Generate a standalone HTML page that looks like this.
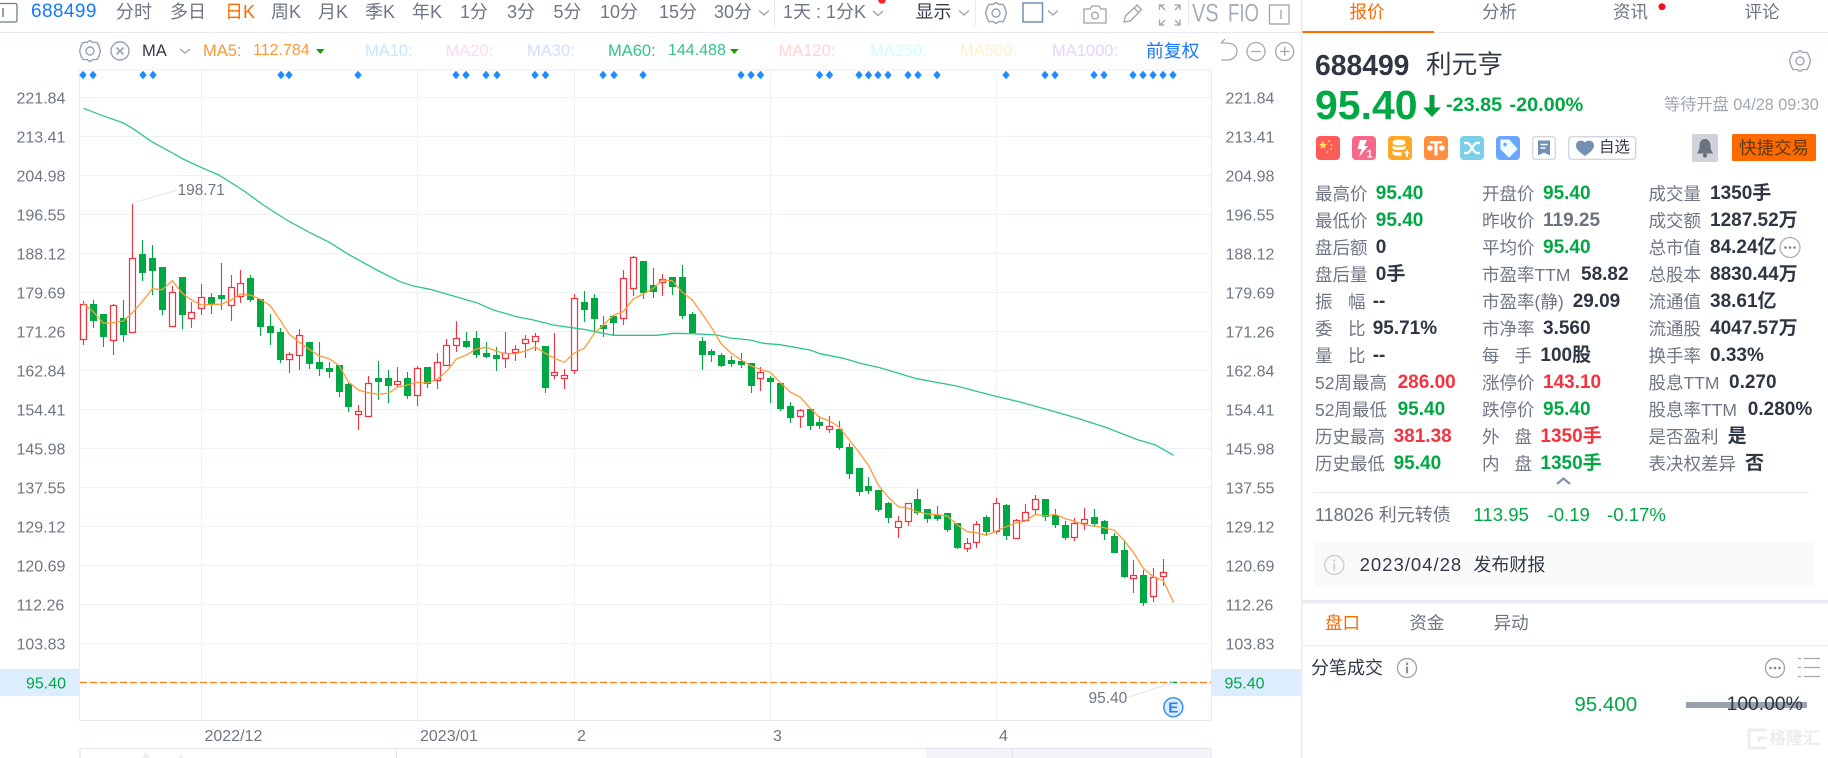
<!DOCTYPE html>
<html lang="zh-CN">
<head>
<meta charset="utf-8">
<title>688499 利元亨</title>
<style>
html,body{margin:0;padding:0;background:#fff}
body{width:1828px;height:758px;overflow:hidden;position:relative;font-family:"Liberation Sans","Noto Sans CJK SC",sans-serif;color:#6f7684}
svg.bg{position:absolute;left:0;top:0}
svg text{font-family:"Liberation Sans","Noto Sans CJK SC",sans-serif}
.t{position:absolute;white-space:nowrap;line-height:20px;font-size:17.5px;color:#6f7684}
.v{position:absolute;white-space:nowrap;line-height:20px;font-size:19px;font-weight:bold;color:#2f3643}
.g{color:#00a843}.r{color:#f5333f}.m{color:#6c7280}
.tb{font-size:18px;top:2px;color:#6f7684}
.ma{font-size:16.5px;top:41px}
</style>
</head>
<body>
<svg class="bg" width="1828" height="758" viewBox="0 0 1828 758" xmlns="http://www.w3.org/2000/svg">
<defs>
<g id="gear" fill="none" stroke-linejoin="round"><path d="M0-10.5 3-8.6 7-8.6 9-5 10.4 0 9 5 7 8.6 3 8.6 0 10.5-3 8.6-7 8.6-9 5-10.4 0-9-5-7-8.6-3-8.6Z"/><circle r="4"/></g>
</defs>
<!-- lines -->
<rect x="0" y="32" width="1302" height="1" fill="#e6e9ef"/>
<rect x="1302" y="32" width="526" height="1" fill="#e6e9ef"/>
<rect x="1302" y="31" width="132" height="2" fill="#ff6a00"/>
<rect x="1301" y="0" width="1.5" height="758" fill="#e9ecf1"/>
<!-- highlights -->
<rect x="0" y="669" width="79.5" height="27" fill="#dbedff"/>
<rect x="1212" y="669" width="89" height="27" fill="#dbedff"/>
<!-- grid -->
<path stroke="#eef1f5" fill="none" d="M80 97.5H1211M80 136.5H1211M80 175.5H1211M80 214.5H1211M80 253.5H1211M80 292.5H1211M80 331.5H1211M80 370.5H1211M80 409.5H1211M80 448.5H1211M80 487.5H1211M80 526.5H1211M80 565.5H1211M80 604.5H1211M80 643.5H1211M201.5 70V720M417.5 70V720M574.5 70V720M770.5 70V720M996.5 70V720"/>
<path stroke="#e8ebf0" fill="none" d="M79.5 70V720.5H1211.5V70H79.5"/>
<!-- bottom slider -->
<rect x="926" y="749" width="285" height="9" fill="#f4f5f8"/>
<path stroke="#e3e7ed" stroke-width="1.2" fill="none" d="M80 748.5H1211M80 748V758M396.5 749V758M1012.5 749V758M1211 748V758"/>
<path fill="#eef2f7" d="M142 758l4-7 4 7zM178 758l3-4 3 4z"/>
<!-- dashed -->
<path stroke="#ff7f1f" stroke-width="1.2" stroke-dasharray="7 3" fill="none" d="M80 682.5H1211"/>
<!-- diamonds -->
<path fill="#1e8cff" stroke="#1e8cff" stroke-width="1" stroke-linejoin="round" d="M83 71.5l3 3.5-3 3.5-3-3.5zM93 71.5l3 3.5-3 3.5-3-3.5zM143 71.5l3 3.5-3 3.5-3-3.5zM153 71.5l3 3.5-3 3.5-3-3.5zM281 71.5l3 3.5-3 3.5-3-3.5zM289 71.5l3 3.5-3 3.5-3-3.5zM358 71.5l3 3.5-3 3.5-3-3.5zM456 71.5l3 3.5-3 3.5-3-3.5zM466 71.5l3 3.5-3 3.5-3-3.5zM486 71.5l3 3.5-3 3.5-3-3.5zM497 71.5l3 3.5-3 3.5-3-3.5zM535 71.5l3 3.5-3 3.5-3-3.5zM545.5 71.5l3 3.5-3 3.5-3-3.5zM603 71.5l3 3.5-3 3.5-3-3.5zM614 71.5l3 3.5-3 3.5-3-3.5zM643 71.5l3 3.5-3 3.5-3-3.5zM741 71.5l3 3.5-3 3.5-3-3.5zM751 71.5l3 3.5-3 3.5-3-3.5zM760.5 71.5l3 3.5-3 3.5-3-3.5zM819.5 71.5l3 3.5-3 3.5-3-3.5zM829.5 71.5l3 3.5-3 3.5-3-3.5zM859 71.5l3 3.5-3 3.5-3-3.5zM868.5 71.5l3 3.5-3 3.5-3-3.5zM878 71.5l3 3.5-3 3.5-3-3.5zM888 71.5l3 3.5-3 3.5-3-3.5zM908 71.5l3 3.5-3 3.5-3-3.5zM918 71.5l3 3.5-3 3.5-3-3.5zM937 71.5l3 3.5-3 3.5-3-3.5zM1006 71.5l3 3.5-3 3.5-3-3.5zM1045 71.5l3 3.5-3 3.5-3-3.5zM1055 71.5l3 3.5-3 3.5-3-3.5zM1094 71.5l3 3.5-3 3.5-3-3.5zM1104 71.5l3 3.5-3 3.5-3-3.5zM1133 71.5l3 3.5-3 3.5-3-3.5zM1143 71.5l3 3.5-3 3.5-3-3.5zM1153 71.5l3 3.5-3 3.5-3-3.5zM1163 71.5l3 3.5-3 3.5-3-3.5zM1173 71.5l3 3.5-3 3.5-3-3.5z"/>
<!-- green wicks -->
<path stroke="#00a843" stroke-width="1.1" fill="none" d="M93.5 300V328M103.5 314V347M123.5 300V342M142.5 240V281M152.5 245V295M162.5 267V315M182.5 277V329M211.5 293V314M221.5 263V310M250.5 275V302M260.5 299V336M270.5 314V345M280.5 328V363M309.5 342V369M319.5 342V376M329.5 362V378M339.5 365V397M348.5 383V412M378.5 361V400M388.5 370V403M407.5 372V399M427.5 367V388M466.5 332V348M476.5 331V358M486.5 342V358M496.5 347V371M545.5 346V393M584.5 291V322M594.5 294V333M603.5 316V337M613.5 316V335M643.5 261V299M653.5 268V298M672.5 277V295M682.5 265V319M692.5 312V333M702.5 337V370M711.5 349V362M721.5 353V367M731.5 356V367M741.5 353V368M751.5 363V393M770.5 376V403M780.5 383V411M790.5 402V423M810.5 409V430M819.5 416V429M839.5 421V450M849.5 443V479M859.5 468V496M868.5 477V494M878.5 490V512M888.5 502V523M917.5 489V515M927.5 509V523M937.5 506V521M947.5 513V532M957.5 523V549M986.5 515V536M1006.5 504V540M1045.5 499V521M1055.5 509V528M1065.5 521V540M1094.5 509V527M1104.5 520V540M1114.5 533V553M1124.5 540V578M1143.5 570V606"/>
<!-- green bodies -->
<path fill="#00a843" d="M90 304h7v17h-7zM100 314h7v23h-7zM120 318h7v17h-7zM139 254h7v19h-7zM149 258h7v13h-7zM159 267h7v43h-7zM179 277h7v38h-7zM208 297h7v7h-7zM218 295h7v4h-7zM247 278h7v22h-7zM257 299h7v28h-7zM267 326h7v7h-7zM277 332h7v28h-7zM306 342h7v22h-7zM316 362h7v7h-7zM326 368h7v4h-7zM336 365h7v27h-7zM345 384h7v23h-7zM375 378h7v4h-7zM385 378h7v8h-7zM404 378h7v18h-7zM424 367h7v17h-7zM463 341h7v6h-7zM473 338h7v17h-7zM483 353h7v4h-7zM493 355h7v4h-7zM542 346h7v42h-7zM581 302h7v8h-7zM591 298h7v21h-7zM600 325h7v4h-7zM610 316h7v7h-7zM640 261h7v32h-7zM650 285h7v7h-7zM669 277h7v10h-7zM679 277h7v39h-7zM689 314h7v19h-7zM699 341h7v14h-7zM708 351h7v4h-7zM718 355h7v11h-7zM728 360h7v4h-7zM738 361h7v4h-7zM748 363h7v23h-7zM767 378h7v4h-7zM777 383h7v26h-7zM787 406h7v12h-7zM807 409h7v17h-7zM816 422h7v4h-7zM836 429h7v19h-7zM846 447h7v27h-7zM856 468h7v24h-7zM865 486h7v5h-7zM875 490h7v20h-7zM885 503h7v15h-7zM914 499h7v14h-7zM924 509h7v10h-7zM934 515h7v4h-7zM944 513h7v17h-7zM954 523h7v25h-7zM983 517h7v15h-7zM1003 505h7v31h-7zM1042 499h7v18h-7zM1052 515h7v10h-7zM1062 525h7v13h-7zM1091 517h7v7h-7zM1101 521h7v13h-7zM1111 536h7v17h-7zM1121 550h7v27h-7zM1140 575h7v28h-7z"/>
<!-- red wicks -->
<path stroke="#f5333f" stroke-width="1.1" fill="none" d="M83.5 301V345M113.5 304V355M132.5 204V333M172.5 286V327M191.5 302V328M201.5 284V315M231.5 275V321M240.5 270V303M289.5 352V373M299.5 329V370M358.5 405V430M368.5 376V417M397.5 367V387M417.5 366V406M437.5 353V389M446.5 339V366M456.5 321V352M505.5 332V368M515.5 345V361M525.5 335V358M535.5 333V351M554.5 333V379M564.5 369V389M574.5 294V374M623.5 270V325M633.5 256V296M662.5 274V296M760.5 367V391M800.5 409V428M829.5 416V433M898.5 516V538M908.5 503V526M967.5 538V552M976.5 521V548M996.5 498V534M1016.5 519V539M1025.5 504V522M1035.5 495V514M1074.5 518V541M1084.5 508V530M1133.5 560V593M1153.5 568V602M1163.5 559V586"/>
<!-- red bodies -->
<path fill="#fff" stroke="#f5333f" stroke-width="1.2" d="M80.5 304.5h6v35h-6zM110.5 305.5h6v35h-6zM129.5 258.5h6v74h-6zM169.5 292.5h6v34h-6zM188.5 312.5h6v6h-6zM198.5 297.5h6v11h-6zM228.5 287.5h6v18h-6zM237.5 283.5h6v13h-6zM286.5 354.5h6v5h-6zM296.5 335.5h6v20h-6zM355.5 411.5h6v3h-6zM365.5 383.5h6v33h-6zM394.5 381.5h6v3h-6zM414.5 368.5h6v27h-6zM434.5 362.5h6v18h-6zM443.5 345.5h6v20h-6zM453.5 338.5h6v7h-6zM502.5 353.5h6v5h-6zM512.5 349.5h6v3h-6zM522.5 339.5h6v4h-6zM532.5 336.5h6v5h-6zM551.5 372.5h6v3h-6zM561.5 375.5h6v3h-6zM571.5 298.5h6v72h-6zM620.5 278.5h6v40h-6zM630.5 257.5h6v31h-6zM659.5 279.5h6v3h-6zM757.5 372.5h6v6h-6zM797.5 410.5h6v6h-6zM826.5 426.5h6v3h-6zM895.5 521.5h6v6h-6zM905.5 503.5h6v18h-6zM964.5 543.5h6v5h-6zM973.5 524.5h6v18h-6zM993.5 503.5h6v28h-6zM1013.5 520.5h6v18h-6zM1022.5 512.5h6v8h-6zM1032.5 499.5h6v10h-6zM1071.5 523.5h6v14h-6zM1081.5 519.5h6v4h-6zM1130.5 575.5h6v3h-6zM1150.5 577.5h6v19h-6zM1160.5 572.5h6v4h-6z"/>
<path stroke="#00a843" stroke-width="1.5" d="M1170 682.5h7"/>
<!-- MA60 -->
<polyline fill="none" stroke="#2fc48d" stroke-width="1.3" points="83.5,108.3 102.7,115.7 122.8,122.7 134,129.3 151.8,141.7 171.9,152.7 183,159 200.9,167.3 218.8,175 242.7,190 263.3,205 288.3,221 310,232.7 330,242.7 348.3,254.3 376.7,270 400,281.7 413.3,286 430,289.3 450,295 476.7,302.7 493.3,310 516.7,316.7 533.3,320 553.3,325 583.3,329.3 613.3,335.3 656.7,335.3 673.3,333.3 693.3,333.7 716.7,335 730,338 750,340 763.3,343.3 780,344.7 810,350 820,353.7 843.3,358.3 860,363.3 880,367.7 896.7,372.7 916.7,378.7 956.7,386 980,392.3 996.7,396.5 1020,402 1049,410 1080,419 1107.5,428 1138.3,440 1155,444.7 1173.7,455.3"/>
<!-- MA5 -->
<polyline fill="none" stroke="#ff9a3c" stroke-width="1.3" points="83.3,303.3 93.3,311.7 103.3,323.3 113.3,322.7 123.3,321 132.3,312.7 142.3,301.7 152.3,288.7 162.3,289.7 172.3,280.7 182.3,293.3 191.3,300 201.3,305 211.3,304.3 221.3,304.3 231.3,300 240.3,294 250.3,295 260.3,299.3 270.3,305.7 280,320 289.3,334.3 299.3,342.3 309.3,349.3 319.3,356 329.3,358.7 339.3,365.7 348.3,381.7 358.3,390 368.3,392.7 378.3,394.3 388.3,393.3 397.3,387.3 407.3,385 417.3,382.3 427.3,383 437.3,379.3 446.3,371.7 456.3,359 466.3,355 476.3,349 486.3,347.3 496.3,351 505.3,353.7 515.3,353.7 525.3,351 535.3,347 545.3,353.3 554.3,358.3 564.3,362.3 574.3,353 584.3,348.3 594.3,333.3 603.3,325 613.3,315.3 623.3,311.7 633.3,299 643.3,294 653.3,288.3 662.3,280 672.3,280.7 682.3,292.3 692.3,300 702.3,314 711.3,327.3 721.3,344 731.3,353.3 741.3,360 751.3,366 760.3,369.3 770.3,372.3 780.3,382.7 790.3,392 800.3,397.3 810.3,408.3 819.3,417.3 829.3,420.7 839.3,427.3 849.3,440 859.3,452.7 868.3,465 878.3,485 888.3,497.3 898.3,506.7 908.3,508.3 917.3,511.7 927.3,514 937.3,514.7 947.3,516 957.3,525 967.3,531.7 976.3,532.7 986.3,535.3 996.3,531 1006.3,526.7 1016.3,522.7 1025.3,521 1035.3,514.3 1045.3,516 1055.3,514.3 1065.3,518.7 1074.3,521 1084.3,525 1094.3,526 1104.3,527.7 1114.3,530.3 1124.3,540.7 1133.3,552.3 1143.3,568.3 1153.3,576.7 1163.3,580.7 1173.7,602.7"/>
<!-- annotations -->
<path stroke="#e2e4e9" fill="none" d="M132.5 203L177 190M1129 697L1173 682.5"/>
<g font-size="15.5" fill="#6f7684">
<text x="177.5" y="195">198.71</text>
<text x="1088.5" y="703">95.40</text>
</g>
<circle cx="1173.3" cy="707.3" r="9.5" fill="#dcecff" stroke="#3b8fef" stroke-width="1.5"/>
<text x="1173.3" y="712.6" font-size="15" fill="#2b7fe6" text-anchor="middle" font-weight="bold">E</text>
<!-- axis labels -->
<g font-size="16" fill="#6f7684">
<text x="16.5" y="103.5">221.84</text><text x="16.5" y="142.5">213.41</text><text x="16.5" y="181.5">204.98</text><text x="16.5" y="220.5">196.55</text><text x="16.5" y="259.5">188.12</text><text x="16.5" y="298.5">179.69</text><text x="16.5" y="337.5">171.26</text><text x="16.5" y="376.5">162.84</text><text x="16.5" y="415.5">154.41</text><text x="16.5" y="454.5">145.98</text><text x="16.5" y="493.5">137.55</text><text x="16.5" y="532.5">129.12</text><text x="16.5" y="571.5">120.69</text><text x="16.5" y="610.5">112.26</text><text x="16.5" y="649.5">103.83</text>
<text x="1225.5" y="103.5">221.84</text><text x="1225.5" y="142.5">213.41</text><text x="1225.5" y="181.5">204.98</text><text x="1225.5" y="220.5">196.55</text><text x="1225.5" y="259.5">188.12</text><text x="1225.5" y="298.5">179.69</text><text x="1225.5" y="337.5">171.26</text><text x="1225.5" y="376.5">162.84</text><text x="1225.5" y="415.5">154.41</text><text x="1225.5" y="454.5">145.98</text><text x="1225.5" y="493.5">137.55</text><text x="1225.5" y="532.5">129.12</text><text x="1225.5" y="571.5">120.69</text><text x="1225.5" y="610.5">112.26</text><text x="1225.5" y="649.5">103.83</text>
<text x="204.5" y="741">2022/12</text><text x="420" y="741">2023/01</text><text x="577" y="741">2</text><text x="773" y="741">3</text><text x="999" y="741">4</text>
<text x="26" y="688.5" fill="#00a843">95.40</text><text x="1224.5" y="688.5" fill="#00a843">95.40</text>
</g>
<!-- toolbar icons -->
<rect x="-8" y="3.5" width="25" height="18.5" rx="1.5" fill="none" stroke="#6e7c8e" stroke-width="1.3"/><path d="M3 8v9" stroke="#6e7c8e" stroke-width="1.5"/>
<g fill="none" stroke="#9aa3ae" stroke-width="1.3"><path d="M759 10.5l5 4.5 5-4.5M873 11l5 4.5 5-4.5M959 10.5l5 4.5 5-4.5M1048 10.5l5 4.5 5-4.5M180 49l5 4 5-4"/></g>
<path d="M774.5 0v26M975.5 0v26M1188.5 0v26" stroke="#e6e9ef"/>
<circle cx="882" cy="0" r="3.8" fill="#f5262f"/>
<use href="#gear" transform="translate(996 13)" stroke="#94a0ae" stroke-width="1.4"/>
<rect x="1023" y="3" width="19.5" height="19" fill="none" stroke="#7490b0" stroke-width="1.5"/>
<g fill="none" stroke="#9aa3ae" stroke-width="1.3">
<path d="M1084 9h6l2-3h7l2 3h5v14h-22z"/><circle cx="1095" cy="15.5" r="3.4"/>
<path d="M1124 22l1.5-6L1137 5l4.5 4.5-11 11.5zM1134 8l4.5 4.5"/>
<path d="M1159.5 10V5h5M1174.5 5h5.5v5M1180 19.5V25h-5.5M1164.5 25h-5V19.5M1160 5l5 5M1180 5l-5 5M1180 25l-5-5M1160 25l5-5"/>
<rect x="1269.5" y="5" width="19.5" height="19"/><path d="M1281 10v9"/>
</g>
<text transform="translate(1192 21.5) scale(1 1.25)" font-size="20" fill="#a4adba">VS</text>
<text transform="translate(1228 21.5) scale(.93 1.25)" font-size="20" fill="#a4adba">FIO</text>
<!-- chart header icons -->
<use href="#gear" transform="translate(90 51)" stroke="#94a3b6" stroke-width="1.4"/>
<circle cx="120" cy="51" r="9" fill="none" stroke="#94a3b6" stroke-width="1.4"/>
<path d="M116.5 47.5l7 7M123.5 47.5l-7 7" stroke="#94a3b6" stroke-width="1.6"/>
<path d="M316 49l8.5 0-4.2 5z" fill="#1a9a00"/><path d="M730 49l8.5 0-4.2 5z" fill="#1a9a00"/>
<g fill="none" stroke="#a0a8b3" stroke-width="1.3">
<path d="M1221 43h5M1221 43l4-4M1225 43c8 0 12 3 12 8s-4 9-10 9h-6"/>
<circle cx="1256" cy="51.5" r="9"/><path d="M1251.5 51.5h9"/>
<circle cx="1284.7" cy="51.5" r="9"/><path d="M1280.2 51.5h9M1284.7 47v9"/>
</g>
<!-- panel -->
<circle cx="1662" cy="6.7" r="3.5" fill="#f00f1e"/>
<use href="#gear" transform="translate(1800 61)" stroke="#a0a8b4" stroke-width="1.4"/>
<path d="M1429.5 95h5v12.5h6.5L1432 117l-9-9.5h6.5z" fill="#00a040"/>
<!-- badges -->
<rect x="1316" y="136" width="24" height="24" rx="4" fill="#fb5b5b"/>
<path d="M1323 141l1.2 2.7 2.9.3-2.2 1.9.7 2.9-2.6-1.5-2.6 1.5.7-2.9-2.2-1.9 2.9-.3z" fill="#ffe34d"/>
<g fill="#ffd34d"><circle cx="1329" cy="141" r="1"/><circle cx="1331.5" cy="145" r="1"/><circle cx="1331" cy="149" r="1"/><circle cx="1327.5" cy="152" r="1"/></g>
<rect x="1352" y="136" width="24" height="24" rx="4" fill="#fb6789"/>
<path d="M1360 140h7l-3 6h4l-9 11 2.5-8h-4z" fill="#fff"/>
<text x="1366.5" y="157.5" font-size="11" font-weight="bold" fill="#fff">1</text>
<rect x="1388" y="136" width="24" height="24" rx="4" fill="#ffa726"/>
<g fill="#fff"><ellipse cx="1399" cy="142.5" rx="6.5" ry="3"/><path d="M1392.5 145.5c2 2 11 2 13 0v3c-2 2-11 2-13 0zM1392.5 150.5c2 2 8 2 9 1.5v3.5c-3 .8-7 .5-9-1.5z"/><path d="M1407 150l3 3.5h-2v3.5h-2v-3.5h-2z"/></g>
<rect x="1424" y="136" width="24" height="24" rx="4" fill="#ff8f3e"/>
<path d="M1430 141h12v2.5h-4.5v12h-3v-12H1430z" fill="#fff"/><circle cx="1430" cy="148" r="2.8" fill="#fff"/><circle cx="1442" cy="148" r="2.8" fill="#fff"/>
<rect x="1460" y="136" width="24" height="24" rx="4" fill="#7bcfe8"/>
<path d="M1464 143h3c4 0 6 10 10 10h3M1464 153h3c4 0 6-10 10-10h3" fill="none" stroke="#fff" stroke-width="2.2"/>
<rect x="1496" y="136" width="24" height="24" rx="4" fill="#6aa6ff"/>
<path d="M1501 140h8l8 9-8 8-8-8z" fill="#eefcff" stroke="#eefcff" stroke-linejoin="round"/><circle cx="1505" cy="144.5" r="1.8" fill="#6aa6ff"/>
<rect x="1532.7" y="136.7" width="22.6" height="22.6" rx="2.5" fill="#fff" stroke="#d0d7e0" stroke-width="1.4"/>
<path d="M1538 140.5h12v15l-6-3-6 3z" fill="#7390b0"/><path d="M1540.5 144.5h7M1540.5 148h5" stroke="#fff" stroke-width="1.4"/>
<rect x="1568.7" y="136.7" width="67" height="22.6" rx="3" fill="#fff" stroke="#d0d7e0" stroke-width="1.4"/>
<path d="M1585 156c-4-3-9-6-9-10.500 0-5 6-6.500 9-3 3-3.500 9-2 9 3 0 4.500-5 7.500-9 10.500z" fill="#7390b0"/>
<rect x="1692" y="134" width="26" height="28" rx="1.5" fill="#d0d3d9"/>
<path d="M1705 139c4 0 5.500 3.500 5.500 7 0 4 1.500 5.500 2.500 7.500h-16c1-2 2.500-3.500 2.500-7.500 0-3.500 1.500-7 5.500-7z" fill="#6b7280"/><circle cx="1705" cy="155.500" r="2.200" fill="#6b7280"/>
<rect x="1732" y="134" width="84" height="27" rx="1.500" fill="#ff6a00"/>
<circle cx="1790" cy="247.500" r="10" fill="#fff" stroke="#a5adb8" stroke-width="1.200"/>
<g fill="#7d8694"><circle cx="1785.500" cy="247.500" r="1.300"/><circle cx="1790" cy="247.500" r="1.300"/><circle cx="1794.500" cy="247.500" r="1.300"/></g>
<path d="M1557 484l6.500-5.500 6.500 5.500" fill="none" stroke="#7f93ad" stroke-width="2.200"/>
<rect x="1314" y="492" width="495" height="1" fill="#e6ebf1"/>
<rect x="1314" y="542" width="500.500" height="44.500" rx="4" fill="#fafafa"/>
<circle cx="1334.300" cy="565" r="9.500" fill="none" stroke="#cfcfcf" stroke-width="1.400"/>
<path d="M1334.300 559.500v2M1334.300 563.500v7" stroke="#cfcfcf" stroke-width="1.800"/>
<rect x="1302" y="600" width="526" height="3.500" fill="#e9edf3"/>
<rect x="1302" y="645" width="526" height="1.200" fill="#e6ebf1"/>
<circle cx="1407" cy="668" r="9.500" fill="none" stroke="#a0a8b4" stroke-width="1.400"/>
<path d="M1407 662.500v2.500M1407 666.500v7" stroke="#8a93a0" stroke-width="2.200"/>
<circle cx="1775" cy="668" r="9.500" fill="none" stroke="#a0a8b4" stroke-width="1.400"/>
<g fill="#7d8694"><circle cx="1770.500" cy="668" r="1.300"/><circle cx="1775" cy="668" r="1.300"/><circle cx="1779.500" cy="668" r="1.300"/></g>
<path d="M1798 658.500h3M1804 658.500h16M1798 667.500h3M1804 667.500h16M1798 676.500h3M1804 676.500h16" stroke="#a0a8b4" stroke-width="1.300"/>
<rect x="1686" y="702" width="121" height="6" fill="#98a1ad"/>
<path d="M1767 730h-18v18h18M1767 738h-8v4" fill="none" stroke="#ececec" stroke-width="3"/>
</svg>

<!-- toolbar -->
<span class="t" style="left:31px;top:2px;font-size:19px;letter-spacing:.4px;color:#1677ff">688499</span>
<span class="t tb" style="left:116px">分时</span>
<span class="t tb" style="left:170px">多日</span>
<span class="t tb" style="left:225px;color:#ff6a00">日K</span>
<span class="t tb" style="left:271px">周K</span>
<span class="t tb" style="left:318px">月K</span>
<span class="t tb" style="left:365px">季K</span>
<span class="t tb" style="left:412px">年K</span>
<span class="t tb" style="left:460px">1分</span>
<span class="t tb" style="left:507px">3分</span>
<span class="t tb" style="left:553.500px">5分</span>
<span class="t tb" style="left:600px">10分</span>
<span class="t tb" style="left:659px">15分</span>
<span class="t tb" style="left:714px">30分</span>
<span class="t tb" style="left:783px">1天 : 1分K</span>
<span class="t tb" style="left:915.500px;color:#333a47">显示</span>
<!-- MA row -->
<span class="t ma" style="left:142px;color:#333a47">MA</span>
<span class="t ma" style="left:203px;color:#ff9639">MA5:</span>
<span class="t ma" style="left:253px;font-size:16px;color:#ff9639">112.784</span>
<span class="t ma" style="left:365px;color:#c5e6fa">MA10:</span>
<span class="t ma" style="left:445.500px;color:#fbd9f0">MA20:</span>
<span class="t ma" style="left:527px;color:#cfe0ff">MA30:</span>
<span class="t ma" style="left:608px;color:#2fc48d">MA60:</span>
<span class="t ma" style="left:668px;font-size:16px;color:#2fc48d">144.488</span>
<span class="t ma" style="left:778.500px;color:#ffd4d4">MA120:</span>
<span class="t ma" style="left:870px;color:#ccffff">MA250:</span>
<span class="t ma" style="left:960px;color:#fff0c8">MA500:</span>
<span class="t ma" style="left:1052px;color:#e4d4ff">MA1000:</span>
<span class="t" style="left:1146px;top:41px;font-size:17.800px;color:#1677ff">前复权</span>
<!-- panel tabs -->
<span class="t" style="left:1349.500px;top:2px;color:#ff6a00">报价</span>
<span class="t" style="left:1482px;top:2px">分析</span>
<span class="t" style="left:1613px;top:2px">资讯</span>
<span class="t" style="left:1744.500px;top:2px">评论</span>
<!-- header -->
<span class="v" style="left:1315px;top:55px;font-size:28.300px;color:#303744">688499</span>
<span class="t" style="left:1426px;top:55px;font-size:25.600px;color:#303744">利元亨</span>
<span class="v g" style="left:1315px;top:95px;font-size:41px">95.40</span>
<span class="v g" style="left:1446px;top:95px;font-size:19.800px">-23.85</span>
<span class="v g" style="left:1509.500px;top:95px;font-size:19.800px">-20.00%</span>
<span class="t" style="left:1664px;top:95px;font-size:16.200px;color:#a0a6b1">等待开盘 04/28 09:30</span>
<span class="t" style="left:1599px;top:138px;font-size:15.500px;color:#333a47">自选</span>
<span class="t" style="left:1739px;top:137.500px;color:#5b3a14">快捷交易</span>
<!-- col 1 -->
<span class="t" style="left:1315px;top:183.500px">最高价</span><span class="v g" style="left:1375.800px;top:183.500px">95.40</span>
<span class="t" style="left:1315px;top:210.500px">最低价</span><span class="v g" style="left:1375.800px;top:210.500px">95.40</span>
<span class="t" style="left:1315px;top:237.500px">盘后额</span><span class="v" style="left:1375.800px;top:237.500px">0</span>
<span class="t" style="left:1315px;top:264.500px">盘后量</span><span class="v" style="left:1375.800px;top:264.500px">0手</span>
<span class="t" style="left:1315px;top:291.500px">振</span><span class="t" style="left:1348px;top:291.500px">幅</span><span class="v" style="left:1372.700px;top:291.500px">--</span>
<span class="t" style="left:1315px;top:318.500px">委</span><span class="t" style="left:1348px;top:318.500px">比</span><span class="v" style="left:1372.700px;top:318.500px">95.71%</span>
<span class="t" style="left:1315px;top:345.500px">量</span><span class="t" style="left:1348px;top:345.500px">比</span><span class="v" style="left:1372.700px;top:345.500px">--</span>
<span class="t" style="left:1315px;top:372.500px">52周最高</span><span class="v r" style="left:1397.600px;top:372.500px">286.00</span>
<span class="t" style="left:1315px;top:399.500px">52周最低</span><span class="v g" style="left:1397.600px;top:399.500px">95.40</span>
<span class="t" style="left:1315px;top:426.500px">历史最高</span><span class="v r" style="left:1393.600px;top:426.500px">381.38</span>
<span class="t" style="left:1315px;top:453.500px">历史最低</span><span class="v g" style="left:1393.600px;top:453.500px">95.40</span>
<!-- col 2 -->
<span class="t" style="left:1482px;top:183.500px">开盘价</span><span class="v g" style="left:1543px;top:183.500px">95.40</span>
<span class="t" style="left:1482px;top:210.500px">昨收价</span><span class="v m" style="left:1543px;top:210.500px">119.25</span>
<span class="t" style="left:1482px;top:237.500px">平均价</span><span class="v g" style="left:1543px;top:237.500px">95.40</span>
<span class="t" style="left:1482px;top:264.500px">市盈率TTM</span><span class="v" style="left:1581px;top:264.500px">58.82</span>
<span class="t" style="left:1482px;top:291.500px">市盈率(静)</span><span class="v" style="left:1572.700px;top:291.500px">29.09</span>
<span class="t" style="left:1482px;top:318.500px">市净率</span><span class="v" style="left:1543px;top:318.500px">3.560</span>
<span class="t" style="left:1482px;top:345.500px">每</span><span class="t" style="left:1514.500px;top:345.500px">手</span><span class="v" style="left:1540.400px;top:345.500px">100股</span>
<span class="t" style="left:1482px;top:372.500px">涨停价</span><span class="v r" style="left:1543px;top:372.500px">143.10</span>
<span class="t" style="left:1482px;top:399.500px">跌停价</span><span class="v g" style="left:1543px;top:399.500px">95.40</span>
<span class="t" style="left:1482px;top:426.500px">外</span><span class="t" style="left:1514.500px;top:426.500px">盘</span><span class="v r" style="left:1540.400px;top:426.500px">1350手</span>
<span class="t" style="left:1482px;top:453.500px">内</span><span class="t" style="left:1514.500px;top:453.500px">盘</span><span class="v g" style="left:1540.400px;top:453.500px">1350手</span>
<!-- col 3 -->
<span class="t" style="left:1648.500px;top:183.500px">成交量</span><span class="v" style="left:1710px;top:183.500px">1350手</span>
<span class="t" style="left:1648.500px;top:210.500px">成交额</span><span class="v" style="left:1710px;top:210.500px">1287.52万</span>
<span class="t" style="left:1648.500px;top:237.500px">总市值</span><span class="v" style="left:1710px;top:237.500px">84.24亿</span>
<span class="t" style="left:1648.500px;top:264.500px">总股本</span><span class="v" style="left:1710px;top:264.500px">8830.44万</span>
<span class="t" style="left:1648.500px;top:291.500px">流通值</span><span class="v" style="left:1710px;top:291.500px">38.61亿</span>
<span class="t" style="left:1648.500px;top:318.500px">流通股</span><span class="v" style="left:1710px;top:318.500px">4047.57万</span>
<span class="t" style="left:1648.500px;top:345.500px">换手率</span><span class="v" style="left:1710px;top:345.500px">0.33%</span>
<span class="t" style="left:1648.500px;top:372.500px">股息TTM</span><span class="v" style="left:1729px;top:372.500px">0.270</span>
<span class="t" style="left:1648.500px;top:399.500px">股息率TTM</span><span class="v" style="left:1747.800px;top:399.500px">0.280%</span>
<span class="t" style="left:1648.500px;top:426.500px">是否盈利</span><span class="v" style="left:1727.600px;top:426.500px">是</span>
<span class="t" style="left:1648.500px;top:453.500px">表决权差异</span><span class="v" style="left:1745px;top:453.500px">否</span>
<!-- bond row -->
<span class="t m" style="left:1315px;top:505px;font-size:18px">118026 利元转债</span>
<span class="t g" style="left:1473.400px;top:505px;font-size:18.600px">113.95</span>
<span class="t g" style="left:1547.500px;top:505px;font-size:18.600px">-0.19</span>
<span class="t g" style="left:1607px;top:505px;font-size:18.600px">-0.17%</span>
<span class="t" style="left:1359.600px;top:555px;font-size:18.500px;letter-spacing:1px;color:#333a47">2023/04/28</span>
<span class="t" style="left:1473.400px;top:555px;font-size:18px;color:#333a47">发布财报</span>
<!-- lower tabs -->
<span class="t" style="left:1325px;top:613px;color:#ff6a00">盘口</span>
<span class="t" style="left:1409.400px;top:613px">资金</span>
<span class="t" style="left:1493.600px;top:613px">异动</span>
<span class="t" style="left:1311px;top:658px;font-size:18px;color:#333a47">分笔成交</span>
<span class="t g" style="left:1574.400px;top:695px;font-size:20.500px">95.400</span>
<span class="t" style="left:1726.600px;top:695px;font-size:19.300px;color:#2b3240">100.00%</span>
<span class="t" style="left:1769px;top:729px;font-size:17px;font-weight:bold;color:#ececec">格隆汇</span>
</body>
</html>
